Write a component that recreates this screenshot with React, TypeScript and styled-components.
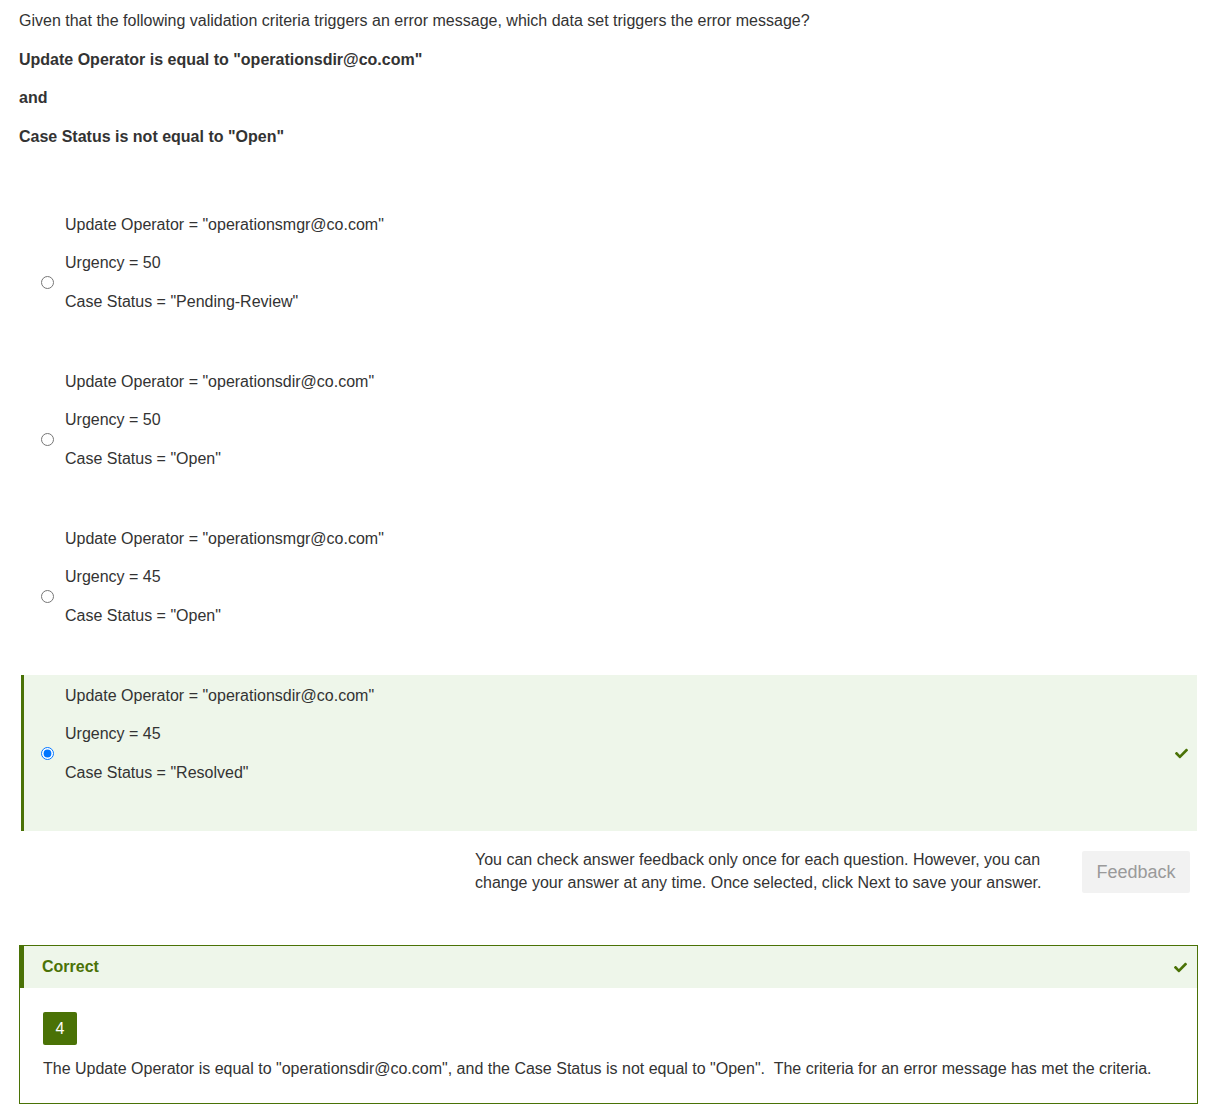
import React from "react";
import styled, { createGlobalStyle } from "styled-components";
import { FaCheck } from "react-icons/fa";

const GREEN = "#4a7206";
const LIGHT_GREEN = "#eef6ea";

const GlobalStyle = createGlobalStyle`
  html, body {
    margin: 0;
    padding: 0;
    background: #ffffff;
  }
  body {
    font-family: "Liberation Sans", Arial, sans-serif;
    font-size: 16px;
    color: #333333;
  }
`;

const Page = styled.div`
  padding: 10px 19px 8px 19px;
`;

const Question = styled.div`
  p {
    margin: 0 0 16px 0;
    line-height: 22.5px;
  }
  p:last-child {
    margin-bottom: 0;
  }
`;

const Lead = styled.p``;

const Criterion = styled.p`
  font-weight: bold;
`;

const OptionList = styled.div`
  margin: 56px 1px 0 2px;
  display: flex;
  flex-direction: column;
  gap: 1px;
`;

const Option = styled.label<{ $selected?: boolean }>`
  display: grid;
  grid-template-columns: 41px 1fr auto;
  align-items: center;
  height: 156px;
  box-sizing: border-box;
  padding: 10px 9px 9px 0;
  border-left: 3px solid ${(p) => (p.$selected ? GREEN : "transparent")};
  background: ${(p) => (p.$selected ? LIGHT_GREEN : "transparent")};
  cursor: pointer;
`;

const Radio = styled.input`
  margin: 0 0 0 17px;
  width: 13px;
  height: 13px;
`;

const OptionText = styled.div`
  p {
    margin: 0 0 16.33px 0;
    line-height: 22px;
    min-height: 22px;
  }
  p:last-child {
    margin-bottom: 0;
  }
`;

const CheckMark = styled.span`
  display: flex;
  align-items: center;
  color: ${GREEN};
  font-size: 13px;
`;

const FeedbackRow = styled.div`
  display: flex;
  justify-content: flex-end;
  align-items: center;
  gap: 35px;
  margin-top: 17px;
  padding-right: 8px;
`;

const FeedbackNote = styled.p`
  margin: 0;
  width: 572px;
  line-height: 23px;
  color: #333333;
`;

const FeedbackButton = styled.button`
  width: 108px;
  height: 42px;
  border: none;
  border-radius: 2px;
  background: #f2f2f2;
  color: #9a9a9a;
  font-family: "Liberation Sans", Arial, sans-serif;
  font-size: 18px;
  padding: 0;
  margin-top: 2px;
`;

const ResultBox = styled.section`
  margin-top: 51px;
  border: 1px solid ${GREEN};
`;

const ResultHeader = styled.div`
  display: flex;
  align-items: center;
  justify-content: space-between;
  height: 42px;
  padding: 0 10px 0 18px;
  border-left: 4px solid ${GREEN};
  background: ${LIGHT_GREEN};
`;

const ResultTitle = styled.span`
  font-weight: bold;
  color: ${GREEN};
  font-size: 16px;
`;

const ResultBody = styled.div`
  padding: 24px 22px 23px 23px;
`;

const AnswerBadge = styled.div`
  width: 34px;
  height: 33px;
  display: flex;
  align-items: center;
  justify-content: center;
  background: ${GREEN};
  color: #ffffff;
  border-radius: 2px;
  font-size: 16px;
`;

const Explanation = styled.p`
  margin: 13px 0 0 0;
  line-height: 22px;
`;

type Opt = { lines: string[]; selected?: boolean };

const options: Opt[] = [
  {
    lines: [
      'Update Operator = "operationsmgr@co.com"',
      "Urgency = 50",
      'Case Status = "Pending-Review"',
    ],
  },
  {
    lines: [
      'Update Operator = "operationsdir@co.com"',
      "Urgency = 50",
      'Case Status = "Open"',
    ],
  },
  {
    lines: [
      'Update Operator = "operationsmgr@co.com"',
      "Urgency = 45",
      'Case Status = "Open"',
    ],
  },
  {
    lines: [
      'Update Operator = "operationsdir@co.com"',
      "Urgency = 45",
      'Case Status = "Resolved"',
    ],
    selected: true,
  },
];

export default function App() {
  return (
    <Page>
      <GlobalStyle />
      <Question>
        <Lead>
          Given that the following validation criteria triggers an error
          message, which data set triggers the error message?
        </Lead>
        <Criterion>Update Operator is equal to "operationsdir@co.com"</Criterion>
        <Criterion>and</Criterion>
        <Criterion>Case Status is not equal to "Open"</Criterion>
      </Question>

      <OptionList>
        {options.map((o, i) => (
          <Option key={i} $selected={o.selected}>
            <Radio
              type="radio"
              name="answer"
              defaultChecked={!!o.selected}
            />
            <OptionText>
              {o.lines.map((l) => (
                <p key={l}>{l}</p>
              ))}
              <p>{"\u00a0"}</p>
            </OptionText>
            {o.selected ? (
              <CheckMark>
                <FaCheck />
              </CheckMark>
            ) : (
              <span />
            )}
          </Option>
        ))}
      </OptionList>

      <FeedbackRow>
        <FeedbackNote>
          You can check answer feedback only once for each question. However,
          you can change your answer at any time. Once selected, click Next to
          save your answer.
        </FeedbackNote>
        <FeedbackButton type="button">Feedback</FeedbackButton>
      </FeedbackRow>

      <ResultBox>
        <ResultHeader>
          <ResultTitle>Correct</ResultTitle>
          <CheckMark>
            <FaCheck />
          </CheckMark>
        </ResultHeader>
        <ResultBody>
          <AnswerBadge>4</AnswerBadge>
          <Explanation>
            The Update Operator is equal to "operationsdir@co.com", and the Case
            Status is not equal to "Open".&nbsp; The criteria for an error
            message has met the criteria.
          </Explanation>
        </ResultBody>
      </ResultBox>
    </Page>
  );
}
